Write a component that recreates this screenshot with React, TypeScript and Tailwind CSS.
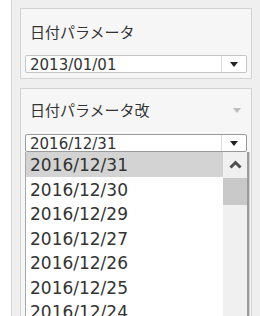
const dates = [
  "2016/12/31",
  "2016/12/30",
  "2016/12/29",
  "2016/12/27",
  "2016/12/26",
  "2016/12/25",
  "2016/12/24",
];

const latin = { fontFamily: '"DejaVu Sans", "Liberation Sans", sans-serif' };
const cjk = { fontFamily: '"Noto Sans CJK JP", "Noto Sans", sans-serif' };

function Caret() {
  return (
    <svg width="8" height="5" viewBox="0 0 8 5">
      <polygon points="0,0 8,0 4,5" fill="#222" />
    </svg>
  );
}

function Dropdown({ value, dark }: { value: string; dark?: boolean }) {
  return (
    <div
      className={
        "ml-[4px] flex h-[18px] w-[222px] rounded-[2px] border bg-white " +
        (dark ? "border-[#9a9a9a]" : "border-[#c6c6c6]")
      }
    >
      <div
        className="flex-1 pl-[4px] pt-[1px] text-[15px] leading-[16px] text-[#333]"
        style={latin}
      >
        {value}
      </div>
      <div className="flex w-[25px] items-center justify-center border-l border-[#dcdcdc]">
        <Caret />
      </div>
    </div>
  );
}

export default function App() {
  return (
    <div className="flex h-[316px] w-[260px] overflow-hidden bg-[#efefef]">
      <div className="w-[12px] shrink-0 border-r border-[#d6d6d6] bg-white" />
      <div className="flex flex-col gap-[9px] pl-[8px] pt-[8px]">
        {/* first parameter */}
        <div className="h-[71px] w-[232px] shrink-0 border border-[#d4d4d4] bg-[#f6f6f6]">
          <div
            className="h-[46px] pl-[9px] pt-[13px] text-[15px] leading-[20px] text-[#333]"
            style={cjk}
          >
            日付パラメータ
          </div>
          <Dropdown value="2013/01/01" />
        </div>

        {/* second parameter, open */}
        <div className="h-[240px] w-[232px] shrink-0 border border-[#d4d4d4] bg-[#f6f6f6]">
          <div className="flex h-[45px] items-start justify-between pl-[9px] pr-[10px] pt-[11px]">
            <span className="text-[15px] leading-[20px] text-[#333]" style={cjk}>
              日付パラメータ改
            </span>
            <svg width="8" height="5" viewBox="0 0 8 5" className="mt-[8px]">
              <polygon points="0,0 8,0 4,5" fill="#bdbdbd" />
            </svg>
          </div>
          <Dropdown value="2016/12/31" dark />
          <div className="ml-[4px] flex w-[225px] border-l border-[#a8a8a8]">
            <div className="flex-1 bg-white">
              {dates.map((d, i) => (
                <div
                  key={d}
                  className={
                    "h-[24.5px] pl-[4px] pt-[3px] text-[17px] leading-[20px] text-[#333] " +
                    (i === 0 ? "bg-[#d3d3d3]" : "")
                  }
                  style={latin}
                >
                  {d}
                </div>
              ))}
            </div>
            <div className="flex w-[24px] flex-col bg-[#f0f0f0]">
              <div className="flex h-[25px] items-center justify-center">
                <svg width="13" height="9" viewBox="0 0 13 9">
                  <polyline
                    points="1.5,7.5 6.5,2.5 11.5,7.5"
                    fill="none"
                    stroke="#4d4d4d"
                    strokeWidth="3"
                  />
                </svg>
              </div>
              <div className="mt-[1px] h-[27px] bg-[#c9c9c9]" />
            </div>
            <div className="w-[3px] border-l-2 border-[#9c9c9c] bg-[#cfcfcf]" />
          </div>
        </div>
      </div>
    </div>
  );
}
